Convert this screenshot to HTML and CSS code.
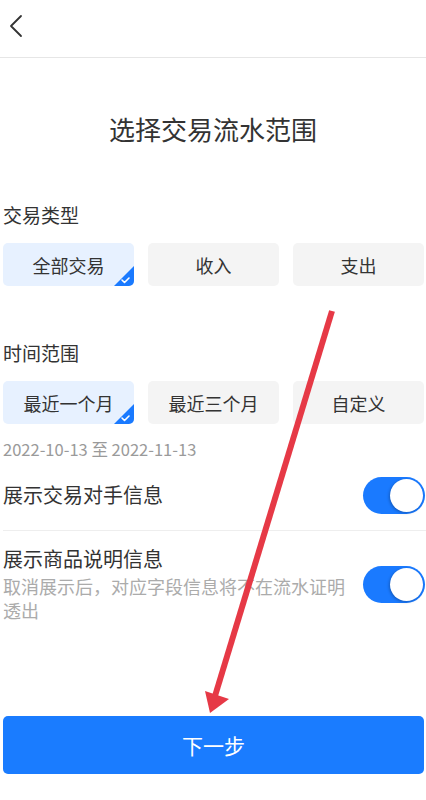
FILE: index.html
```html
<!DOCTYPE html>
<html lang="zh">
<head>
<meta charset="utf-8">
<link rel="stylesheet" href="styles.css">
</head>
<body>
<div class="page">
  <header class="header">
    <svg class="back" width="14" height="24" viewBox="0 0 14 24"><path d="M12 2 L2 12 L12 22" fill="none" stroke="#333" stroke-width="1.8" stroke-linecap="round" stroke-linejoin="round"/></svg>
  </header>
  <h1 class="title">选择交易流水范围</h1>

  <div class="label">交易类型</div>
  <div class="options">
    <div class="opt selected">全部交易<svg class="check" width="20" height="20" viewBox="0 0 20 20"><polygon points="20,0 20,20 0,20" fill="#1a7aff"/><path d="M8 14 L10.5 16.5 L15 12" fill="none" stroke="#fff" stroke-width="1.6" stroke-linecap="round" stroke-linejoin="round"/></svg></div>
    <div class="opt">收入</div>
    <div class="opt">支出</div>
  </div>

  <div class="label label2">时间范围</div>
  <div class="options">
    <div class="opt selected">最近一个月<svg class="check" width="20" height="20" viewBox="0 0 20 20"><polygon points="20,0 20,20 0,20" fill="#1a7aff"/><path d="M8 14 L10.5 16.5 L15 12" fill="none" stroke="#fff" stroke-width="1.6" stroke-linecap="round" stroke-linejoin="round"/></svg></div>
    <div class="opt">最近三个月</div>
    <div class="opt">自定义</div>
  </div>
  <div class="date">2022-10-13 至 2022-11-13</div>

  <div class="row row1">
    <div class="row-text"><div class="row-title">展示交易对手信息</div></div>
    <div class="toggle"><span class="knob"></span></div>
  </div>
  <div class="row row2">
    <div class="row-text">
      <div class="row-title">展示商品说明信息</div>
      <div class="row-sub">取消展示后，对应字段信息将不在流水证明透出</div>
    </div>
    <div class="toggle"><span class="knob"></span></div>
  </div>

  <div class="spacer"></div>
  <div class="next">下一步</div>

  <svg class="arrow" width="426" height="800" viewBox="0 0 426 800">
    <line x1="332" y1="311" x2="215" y2="696" stroke="#e63946" stroke-width="6" stroke-linecap="butt"/>
    <polygon points="205,691 229,699 210,713" fill="#e63946"/>
  </svg>
</div>
</body>
</html>
```

FILE: styles.css
```css
* { box-sizing: border-box; }
html, body { margin: 0; padding: 0; background: #fff; }
body {
  font-family: "Noto Sans CJK SC", "Noto Sans", sans-serif;
  color: #333;
  width: 426px;
}
.page {
  position: relative;
  width: 426px;
  height: 800px;
  display: flex;
  flex-direction: column;
}
.header {
  height: 58px;
  border-bottom: 1px solid #e6e6e6;
  display: flex;
  align-items: flex-start;
  padding: 14px 0 0 9px;
}
.back { display: block; }
.title {
  margin: 53px 0 0;
  font-size: 26px;
  line-height: 36px;
  font-weight: 400;
  text-align: center;
  color: #333;
}
.label {
  margin: 55px 0 0 3px;
  font-size: 19px;
  line-height: 26px;
}
.label2 { margin-top: 54px; }
.options {
  display: grid;
  grid-template-columns: repeat(3, 131px);
  column-gap: 14px;
  margin: 15px 0 0 3px;
}
.opt {
  position: relative;
  height: 43px;
  border-radius: 5px;
  background: #f4f4f4;
  overflow: hidden;
  display: flex;
  align-items: center;
  justify-content: center;
  font-size: 18px;
  color: #333;
}
.opt.selected { background: #e7f1ff; }
.check {
  position: absolute;
  right: 0;
  bottom: 0;
  display: block;
}
.date {
  margin: 15px 0 0 3px;
  font-size: 16.5px;
  line-height: 20px;
  color: #9a9a9a;
}
.row {
  display: flex;
  align-items: center;
  margin-left: 3px;
  padding-right: 1px;
}
.row1 {
  height: 71px;
  margin-top: 1px;
  border-bottom: 1px solid #eeeeee;
}
.row2 {
  padding-top: 15px;
  align-items: flex-start;
}
.row2 .toggle { margin-top: 20px; }
.row-text { flex: 1; padding-right: 15px; }
.row-title {
  font-size: 20px;
  line-height: 26px;
  color: #333;
}
.row-sub {
  margin-top: 2px;
  font-size: 18px;
  line-height: 24px;
  color: #ababab;
}
.toggle {
  position: relative;
  width: 62px;
  height: 37px;
  border-radius: 19px;
  background: #1a7aff;
  flex: none;
}
.knob {
  position: absolute;
  right: 2px;
  top: 2px;
  width: 33px;
  height: 33px;
  border-radius: 50%;
  background: #fff;
  box-shadow: -1px 1px 3px rgba(0,0,0,0.25);
}
.spacer { flex: 1; }
.next {
  margin: 0 2px 26px 3px;
  height: 58px;
  border-radius: 5px;
  background: #1a7cff;
  color: #fff;
  font-size: 21px;
  display: flex;
  align-items: center;
  justify-content: center;
}
.arrow {
  position: absolute;
  left: 0;
  top: 0;
  pointer-events: none;
}
```
